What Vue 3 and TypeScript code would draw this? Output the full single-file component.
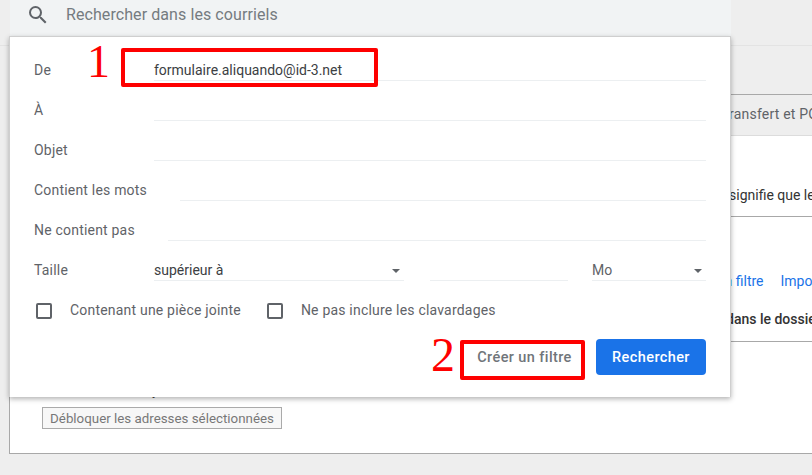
<script setup lang="ts">
interface Field { label: string; value: string; inset: number }
const fields: Field[] = [
  { label: 'De', value: 'formulaire.aliquando@id-3.net', inset: 144 },
  { label: 'À', value: '', inset: 144 },
  { label: 'Objet', value: '', inset: 144 },
  { label: 'Contient les mots', value: '', inset: 170 },
  { label: 'Ne contient pas', value: '', inset: 158 },
]
const checks: string[] = ['Contenant une pièce jointe', 'Ne pas inclure les clavardages']
</script>

<template>
  <div class="page">
    <header class="top"></header>
    <div class="band"></div>
    <main class="content">
      <nav class="tabs"><span class="tab">Transfert et POP/IMAP</span></nav>
      <section class="block first">
        <p class="line">signifie que les messages</p>
      </section>
      <section class="block second">
        <p class="links"><a>Créer un filtre</a><a>Importer des filtres</a></p>
        <p class="bold">dans le dossier</p>
      </section>
      <section class="third">
        <p class="hidden-line">y</p>
        <button class="unblock" type="button">Débloquer les adresses sélectionnées</button>
      </section>
    </main>

    <div class="searchbar">
      <svg class="search-icon" width="24" height="24" viewBox="0 0 24 24" fill="#5f6368">
        <path d="M15.5 14h-.79l-.28-.27A6.47 6.47 0 0 0 16 9.5 6.5 6.5 0 1 0 9.5 16c1.61 0 3.09-.59 4.23-1.57l.27.28v.79l5 4.99L20.49 19l-4.99-5zm-6 0C7.01 14 5 11.99 5 9.5S7.01 5 9.5 5 14 7.01 14 9.5 11.99 14 9.5 14z" />
      </svg>
      <span class="placeholder">Rechercher dans les courriels</span>
    </div>

    <form class="popup" @submit.prevent>
      <div v-for="f in fields" :key="f.label" class="row">
        <label class="label">{{ f.label }}</label>
        <div class="input" :style="{ marginLeft: f.inset - 24 + 'px' }">{{ f.value }}</div>
      </div>
      <div class="row size">
        <label class="label">Taille</label>
        <div class="input sel cmp">supérieur à<i class="caret"></i></div>
        <div class="input num"></div>
        <div class="input sel unit">Mo<i class="caret"></i></div>
      </div>
      <div class="checks">
        <label v-for="c in checks" :key="c" class="check"><i class="box"></i>{{ c }}</label>
      </div>
      <div class="actions">
        <button class="btn ghost" type="button">Créer un filtre</button>
        <button class="btn primary" type="button">Rechercher</button>
      </div>
    </form>

    <div class="mark box1"></div>
    <div class="mark box2"></div>
    <span class="digit d1">1</span>
    <span class="digit d2">2</span>
  </div>
</template>

<style>
html, body { margin: 0; background: #eeeeee; }
</style>

<style scoped>
.page {
  position: relative;
  width: 812px;
  height: 475px;
  overflow: hidden;
  background: #eeeeee;
  font-family: Roboto, "Liberation Sans", sans-serif;
  font-size: 14px;
  color: #444;
}
.top { height: 45px; border-bottom: 1px solid #e3e3e3; }
.band { height: 48px; }
.content {
  margin-left: 9px;
  height: 358px;
  background: #fff;
  border: solid #a8a8a8;
  border-width: 1px 0 1px 1px;
}
.tabs {
  height: 40px;
  background: #eeeeee;
  border-bottom: 1px solid #dcdcdc;
  white-space: nowrap;
  overflow: hidden;
  padding-left: 711px;
  line-height: 38px;
  color: #5f6368;
  letter-spacing: .2px;
}
.block { border-bottom: 1px solid #a8a8a8; white-space: nowrap; overflow: hidden; margin: 0; }
.first { height: 80px; }
.second { height: 124px; }
.line { margin: 49px 0 0 719px; line-height: 20px; color: #333; }
.links { margin: 54px 0 0 670px; line-height: 20px; display: flex; gap: 17px; color: #1a73e8; }
.bold { margin: 18px 0 0 716px; line-height: 20px; font-weight: 500; color: #333; }
.third { padding: 38px 0 0 32px; }
.hidden-line { margin: 0 0 7px; padding-left: 110px; line-height: 20px; color: #444; }
.unblock {
  display: block;
  width: 240px;
  height: 22px;
  padding: 0;
  background: #f7f7f7;
  border: 1px solid #aaa;
  font: 13.33px Roboto, "Liberation Sans", sans-serif;
  color: #777;
}

.searchbar {
  position: absolute;
  left: 10px;
  top: 0;
  width: 721px;
  height: 37px;
  padding-bottom: 8px;
  box-sizing: border-box;
  background: #f1f3f4;
  display: flex;
  align-items: center;
}
.search-icon { margin-left: 16px; }
.placeholder { margin-left: 16px; font-size: 16px; color: #757b80; letter-spacing: .08px; }

.popup {
  position: absolute;
  left: 9px;
  top: 36px;
  width: 672px;
  height: 356px;
  background: #fff;
  border: 1px solid #cfcfcf;
  border-bottom: 0;
  box-shadow: 0 2px 5px rgba(0, 0, 0, .3);
  padding: 4px 24px 0;
  margin: 0;
}
.row {
  position: relative;
  display: flex;
  height: 40px;
}
.label {
  position: absolute;
  left: 0;
  top: 19px;
  line-height: 20px;
  color: #5f6368;
  letter-spacing: .2px;
}
.input {
  flex: 1;
  box-sizing: border-box;
  height: 40px;
  padding-top: 19px;
  border-bottom: 1px solid #eceff1;
  line-height: 20px;
  color: #3c4043;
  position: relative;
  white-space: nowrap;
}
.size .input { flex: none; }
.size .cmp { width: 250px; margin-left: 120px; }
.size .num { width: 138px; margin-left: 26px; }
.size .unit { width: 114px; margin-left: 24px; color: #5f6368; }
.caret {
  position: absolute;
  right: 4px;
  top: 28px;
  border: 4px solid transparent;
  border-top: 4px solid #5f6368;
  border-bottom: 0;
}
.checks {
  display: flex;
  height: 40px;
  margin-top: 9px;
  align-items: center;
  gap: 26px;
  color: #5f6368;
  letter-spacing: .2px;
}
.check { display: flex; align-items: center; margin-left: 2px; }
.check + .check { margin-left: 0; }
.box {
  width: 12px;
  height: 12px;
  margin-top: 1px;
  border: 2px solid #5f6368;
  border-radius: 2px;
  margin-right: 18px;
}
.actions {
  display: flex;
  justify-content: flex-end;
  align-items: center;
  margin-top: 9px;
}
.btn {
  height: 36px;
  border: 0;
  border-radius: 4px;
  padding: 0;
  font: 500 14.5px Roboto, "Liberation Sans", sans-serif;
  letter-spacing: .4px;
}
.ghost { width: 95px; background: transparent; color: #70757a; margin-right: 24px; white-space: nowrap; }
.primary { width: 110px; background: #1a73e8; color: #fff; }

.mark { position: absolute; border: 4px solid #fe0000; border-radius: 2px; box-sizing: border-box; }
.box1 { left: 121px; top: 48px; width: 257px; height: 39px; }
.box2 { left: 460px; top: 340px; width: 125px; height: 40px; }
.digit {
  position: absolute;
  font-family: "Liberation Serif", serif;
  line-height: 48px;
  color: #fe0000;
}
.d1 { left: 87px; top: 38px; font-size: 46px; }
.d2 { left: 431px; top: 331px; font-size: 48px; }
</style>
